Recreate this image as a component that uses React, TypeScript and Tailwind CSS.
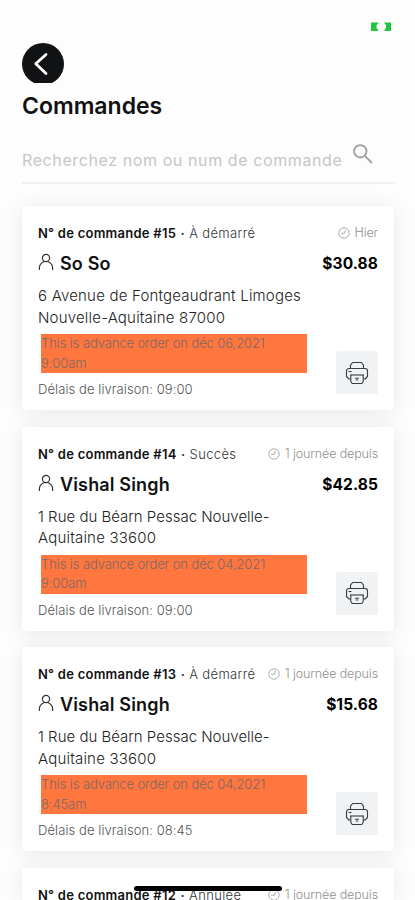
interface Order {
  id: number;
  status: string;
  ago: string;
  customer: string;
  price: string;
  address: string[];
  advance: string[];
  delivery: string;
}

const orders: Order[] = [
  {
    id: 15,
    status: 'À démarré',
    ago: 'Hier',
    customer: 'So So',
    price: '$30.88',
    address: ['6 Avenue de Fontgeaudrant Limoges', 'Nouvelle-Aquitaine 87000'],
    advance: ['This is advance order on déc 06,2021', '9:00am'],
    delivery: '09:00',
  },
  {
    id: 14,
    status: 'Succès',
    ago: '1 journée depuis',
    customer: 'Vishal Singh',
    price: '$42.85',
    address: ['1 Rue du Béarn Pessac Nouvelle-', 'Aquitaine 33600'],
    advance: ['This is advance order on déc 04,2021', '9:00am'],
    delivery: '09:00',
  },
  {
    id: 13,
    status: 'À démarré',
    ago: '1 journée depuis',
    customer: 'Vishal Singh',
    price: '$15.68',
    address: ['1 Rue du Béarn Pessac Nouvelle-', 'Aquitaine 33600'],
    advance: ['This is advance order on déc 04,2021', '8:45am'],
    delivery: '08:45',
  },
];

function ClockIcon() {
  return (
    <svg width="12" height="12" viewBox="0 0 12 12" fill="none" stroke="#a3a3a3" strokeWidth="0.9">
      <circle cx="6" cy="6" r="5.2" />
      <path d="M7.4 3 6.3 6.3H3" />
    </svg>
  );
}

function UserIcon() {
  return (
    <svg width="16" height="18" viewBox="0 0 16 18" fill="none" stroke="#333" strokeWidth="1.2" strokeLinecap="round">
      <circle cx="8" cy="5" r="3.6" />
      <path d="M1.4 16.4v-1.600c0-2.800 1.800-4.800 4.500-6M14.600 16.400v-1.600c0-2.800-1.800-4.800-4.500-6" />
    </svg>
  );
}

function PrinterIcon() {
  return (
    <svg width="24" height="24" viewBox="0 0 24 24" fill="none" stroke="#3a3d40" strokeWidth="1.1" strokeLinejoin="round">
      <path d="M5.500 7.500V4.200L7.600 1.500h8.800l2.100 2.700v3.300" />
      <path d="M5.800 18H4L1.500 15.500V10A2.500 2.500 0 0 1 4 7.500h16a2.500 2.500 0 0 1 2.500 2.500v5.500L20 18h-1.800" />
      <path d="M3.500 10.500h3" />
      <path d="M5 14h14" />
      <path d="M5.800 14v6.500l1.400 2h9.600l1.400-2V14" />
      <path d="M10 17.200h4M10.800 19h2.400" />
    </svg>
  );
}

function OrderHeading({ id, status, ago }: { id: number; status: string; ago: string }) {
  return (
    <div className="flex h-5 items-center justify-between whitespace-nowrap text-[13px] leading-5">
      <div className="flex items-center">
        <span className="font-semibold tracking-[0.25px] text-[#111]">N° de commande #{id}</span>
        <span className="w-[13px] text-center font-semibold text-[#333]">·</span>
        <span className="font-light tracking-[0.35px] text-[#333]">{status}</span>
      </div>
      <div className="flex items-center gap-[5px] text-[12.5px] font-light tracking-[-0.12px] text-[#8f8f8f]">
        <ClockIcon />
        <span>{ago}</span>
      </div>
    </div>
  );
}

function OrderCard({ order }: { order: Order }) {
  return (
    <article className="h-[204px] shrink-0 rounded-[4px] bg-white px-4 pt-[17px] shadow-[0_2px_20px_rgba(0,0,0,0.09)]">
      <OrderHeading id={order.id} status={order.status} ago={order.ago} />

      <div className="mt-[9px] flex h-6 items-center justify-between">
        <div className="flex items-center gap-[6px]">
          <span className="-mt-1">
            <UserIcon />
          </span>
          <h2 className="text-[18px] font-semibold leading-6 tracking-[0.15px] text-[#111]">{order.customer}</h2>
        </div>
        <span className="text-[15.5px] font-bold leading-6 tracking-[0.1px] text-black">{order.price}</span>
      </div>

      <div className="mt-[9px] whitespace-nowrap text-[15px] font-light leading-[21.5px] tracking-[0.2px] text-[#222]">
        {order.address.map((line) =>
          line.startsWith('1 ') ? (
            <p key={line} className="tracking-normal">
              {line}
            </p>
          ) : (
            <p key={line}>{line}</p>
          )
        )}
      </div>

      <div className="flex justify-between">
        <div>
          <div className="ml-[3px] mt-[6px] h-[39px] w-[266px] whitespace-nowrap bg-[#ff773f] text-[13px] font-light leading-[19.5px] tracking-[-0.1px] text-[#7b6763]">
            {order.advance.map((line) => (
              <p key={line}>{line}</p>
            ))}
          </div>
          <p className="mt-[6px] text-[13px] font-light leading-5 tracking-[0.08px] text-[#555]">
            Délais de livraison: {order.delivery}
          </p>
        </div>
        <button className="mt-[23px] flex h-[43px] w-[42px] items-center justify-center rounded-[2px] bg-[#f0f2f3]">
          <PrinterIcon />
        </button>
      </div>
    </article>
  );
}

export default function App() {
  return (
    <div className="relative flex h-[900px] w-[415px] flex-col overflow-hidden bg-[#fdfdfd] px-[22px] font-['Inter','Liberation_Sans',sans-serif]">
      <div className="flex h-[43px] shrink-0 justify-end pr-[2px] pt-[22px]">
        <svg width="20" height="9" viewBox="0 0 20 9" fill="#19c83c">
          <path d="M0 .5h8L5.500 3.200v2.600L7.500 9H0zM20 .5h-7l2 2.700v2.600L13 9h7z" />
        </svg>
      </div>

      <button className="h-10 w-[43px] shrink-0">
        <svg width="43" height="40" viewBox="0 0 43 40" fill="none">
          <circle cx="21" cy="21" r="21" fill="#101213" />
          <path d="M24 11.500 13.800 20.700 24 30.500" stroke="#fff" strokeWidth="2.8" strokeLinecap="round" strokeLinejoin="round" />
        </svg>
      </button>

      <h1 className="mt-[7px] shrink-0 text-[23px] font-semibold leading-8 text-[#111]">Commandes</h1>

      <div className="mt-[14px] flex h-12 w-[373px] shrink-0 border-b-2 border-[#f0f0f0]">
        <span className="w-[331px] whitespace-nowrap pt-[12px] text-[16px] leading-6 tracking-[0.6px] text-[#c6c6c8]">
          Recherchez nom ou num de commande
        </span>
        <svg className="mt-2" width="20" height="20" viewBox="0 0 20 20" fill="none" stroke="#a0a0a0" strokeWidth="1.8">
          <circle cx="7.300" cy="7.300" r="6.200" />
          <path d="M11.800 11.800 19 19" />
        </svg>
      </div>

      <main className="flex w-[372px] flex-col gap-[16.7px] pt-[22px]">
        {orders.map((order) => (
          <OrderCard key={order.id} order={order} />
        ))}
        <article className="h-8 shrink-0 rounded-t-[4px] bg-white px-4 pt-[17px] shadow-[0_2px_20px_rgba(0,0,0,0.09)]">
          <OrderHeading id={12} status="Annulée" ago="1 journée depuis" />
        </article>
      </main>

      <div className="absolute left-[134px] top-[886px] h-[5px] w-[148px] rounded-full bg-black" />
    </div>
  );
}
